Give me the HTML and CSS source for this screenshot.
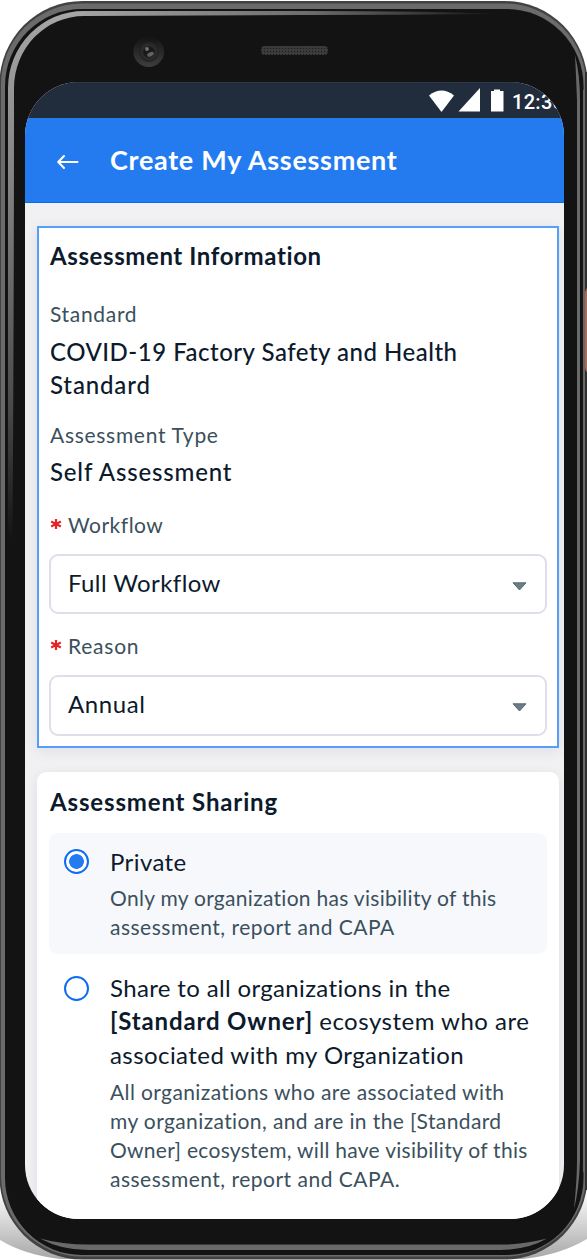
FILE: index.html
```html
<!DOCTYPE html>
<html lang="en">
<head>
<meta charset="utf-8">
<title>Create My Assessment</title>
<link rel="stylesheet" href="styles.css">
</head>
<body>
<div class="phone">
  <svg class="frame" viewBox="0 0 587 1260" width="587" height="1260" aria-hidden="true">
    <defs>
      <linearGradient id="shade" x1="0" y1="0" x2="0" y2="1"><stop offset="0" stop-color="#fff"/><stop offset="1" stop-color="#a8a8a8"/></linearGradient>
      <linearGradient id="leftglow" x1="0" y1="0" x2="0" y2="1"><stop offset="0" stop-color="#a6a6a6"/><stop offset=".3" stop-color="#858585"/><stop offset=".75" stop-color="#4a4a4a"/><stop offset="1" stop-color="#131313"/></linearGradient>
      <linearGradient id="topglow" x1="0" y1="0" x2="1" y2="0"><stop offset="0" stop-color="#a2a2a2"/><stop offset=".55" stop-color="#6c6c6c"/><stop offset="1" stop-color="#131313"/></linearGradient>
      <linearGradient id="lens" x1="0" y1="0" x2="0" y2="1"><stop offset="0" stop-color="#131313"/><stop offset="1" stop-color="#3e3e3e"/></linearGradient>
      <pattern id="mesh" width="3" height="3" patternUnits="userSpaceOnUse"><rect width="3" height="3" fill="#3c3c3c"/><rect width="1.2" height="1.2" fill="#1d1d1d"/></pattern>
    </defs>
    <path d="M0 1190H587V1239Q560 1255 523 1259H60Q25 1255 0 1240Z" fill="url(#shade)"/>
    <rect x="-.5" y="1" width="588" height="1258.500" rx="83" fill="#424244"/>
    <rect x="1" y="3.500" width="585" height="1253" rx="81" fill="#6b6b6b"/>
    <rect x="5" y="9" width="578.500" height="1246" rx="77" fill="#131313"/>
    <path d="M583.700 90V1172" stroke="#686868" stroke-width="1.500"/>
    <path d="M586 72V1190" stroke="#303032" stroke-width="2"/>
    <path d="M8 540V88A76 77 0 0 1 84 11L84 16A70 72 0 0 0 14 88Q14 300 12.500 540Z" fill="url(#leftglow)"/>
    <path d="M83 11H300Q440 11 500 14Q400 15 300 15L83 16Z" fill="url(#topglow)"/>
    <path d="M575 55Q580 75 580 100V1160Q579 1190 574 1209Q577 1180 577 1160V100Q576 75 575 55Z" fill="#696969"/>
    <path d="M40 1238.500Q62 1244.500 88 1244.500H505Q525 1244 547 1238.500Q527 1250 500 1250H88Q61 1250 40 1238.500Z" fill="#696969"/>
    <path d="M585 292Q587 287 588 287V373Q585 372 585 367Z" fill="#a56a59"/>
    <circle cx="148.700" cy="51.800" r="15.300" fill="url(#lens)"/>
    <circle cx="149" cy="52" r="10" fill="#242424"/>
    <circle cx="149" cy="52" r="8.500" fill="#2b2b2b"/>
    <circle cx="149" cy="52" r="5.800" fill="#1a1a1a"/>
    <circle cx="147" cy="49" r="1.900" fill="#747474"/>
    <ellipse cx="150.300" cy="54.500" rx="3.500" ry="2" transform="rotate(-25 150 54)" fill="#626262"/>
    <rect x="261" y="46" width="67" height="9" rx="4" fill="url(#mesh)"/>
  </svg>
  <main class="screen">
    <div class="status">
      <svg class="signals" viewBox="0 0 78 26" width="78" height="26" fill="#fff" aria-hidden="true">
        <path d="M0 7.500Q12.500-2.500 25 7.500L12.500 24Z"/>
        <path d="M29.500 23.500L51 0V23.500Z"/>
        <path d="M62 3H65V1.500H71V3H74.500V23.500H62Z"/>
      </svg>
      <span class="clock">12:30</span>
    </div>
    <header class="bar">
      <svg class="back" viewBox="0 0 22 16" width="22" height="16" fill="none" stroke="#fff" stroke-width="2" stroke-linecap="round" stroke-linejoin="round" aria-label="Back"><path d="M20.500 8H1.500M7 2L1.200 8L7 14"/></svg>
      <h1 class="title">Create My Assessment</h1>
    </header>
    <div class="content">
      <section class="card info">
        <h2 class="heading h-info">Assessment Information</h2>
        <div class="label l-standard">Standard</div>
        <div class="value v-standard"><span class="v1">COVID-19 Factory Safety and Health</span><br><span class="v2">Standard</span></div>
        <div class="label l-type">Assessment Type</div>
        <div class="value v-type">Self Assessment</div>
        <div class="label l-workflow"><svg class="star" viewBox="0 0 12 12" width="12" height="12"><path d="M6 1V11M1.200 3.500L10.800 8.500M1.200 8.500L10.800 3.500"/></svg>Workflow</div>
        <div class="select"><span class="s1">Full Workflow</span><svg class="caret" viewBox="0 0 15 9" width="15" height="9"><path d="M1 .8H14L7.500 8Z"/></svg></div>
        <div class="label l-reason"><svg class="star" viewBox="0 0 12 12" width="12" height="12"><path d="M6 1V11M1.200 3.500L10.800 8.500M1.200 8.500L10.800 3.500"/></svg>Reason</div>
        <div class="select"><span class="s2">Annual</span><svg class="caret" viewBox="0 0 15 9" width="15" height="9"><path d="M1 .8H14L7.500 8Z"/></svg></div>
      </section>
      <section class="card sharing">
        <h2 class="heading h-share">Assessment Sharing</h2>
        <div class="option selected">
          <span class="radio on"></span>
          <div class="text">
            <div class="name n1">Private</div>
            <p class="note"><span class="p1">Only my organization has visibility of this</span><br><span class="p2">assessment, report and CAPA</span></p>
          </div>
        </div>
        <div class="option">
          <span class="radio"></span>
          <div class="text">
            <div class="name"><span class="n2">Share to all organizations in the</span><br><b class="n3">[Standard Owner]</b> <span class="n4">ecosystem who are</span><br><span class="n5">associated with my Organization</span></div>
            <p class="note note-share"><span class="p3">All organizations who are associated with</span><br><span class="p3">my organization, and are in the [Standard</span><br><span class="p4">Owner] ecosystem, will have visibility of this</span><br><span class="p5">assessment, report and CAPA.</span></p>
          </div>
        </div>
      </section>
    </div>
  </main>
</div>
</body>
</html>
```
FILE: styles.css
```css
* { box-sizing: border-box; }
body { margin: 0; background: #fff; font-family: Lato, "Open Sans", sans-serif; color: #0c1a2c; }
.phone { position: relative; width: 587px; height: 1260px; overflow: hidden; padding: 82px 23.5px 41px 25px; }
.frame { position: absolute; left: 0; top: 0; }
.screen { position: relative; height: 1137px; border-radius: 54px; overflow: hidden; background: #f1f1f4; display: flex; flex-direction: column; }

.status { flex: none; height: 36px; background: #212d3d; display: flex; padding: 5px 0 0 404px; border-top: 1px solid #2b3a4b; }
.signals { flex: none; margin-right: 5px; }
.clock { font: 500 20px/28px Roboto, sans-serif; letter-spacing: .3px; color: #fff; white-space: nowrap; }

.bar { flex: none; height: 85px; background: #247bf0; border-bottom: 1px solid #086de9; display: flex; align-items: center; padding: 0 0 0 32px; }
.back { margin: 4px 31px 0 0; }
.title { margin: 0; font-size: 27px; font-weight: 700; line-height: 36px; color: #fff; letter-spacing: .7px; white-space: nowrap; }

.content { padding: 23px 4.500px 0 12px; display: flex; flex-direction: column; gap: 24px; white-space: nowrap; }
.card { background: #fff; box-shadow: 0 3px 14px rgba(20, 25, 50, .08); }
.info { height: 522px; border: 2px solid #559ff6; padding: 11px 10px 0 11px; }
.sharing { height: 500px; border-radius: 9px; padding: 13px 12px 0; }
.heading { margin: 0; font-size: 24px; font-weight: 700; line-height: 34px; }
.h-info { letter-spacing: .6px; }
.h-share { padding-left: 1px; letter-spacing: .85px; }
.label { font-size: 21px; line-height: 30px; color: #3b505c; display: flex; }
.l-standard { margin-top: 26px; letter-spacing: .68px; }
.l-type { margin-top: 19px; letter-spacing: .7px; }
.l-workflow { margin-top: 21px; letter-spacing: .5px; }
.l-reason { margin-top: 17px; letter-spacing: .76px; }
.star { margin: 8px 6px 0 0; fill: none; stroke: #e42323; stroke-width: 2.2; }
.value { font-size: 24px; font-weight: 500; line-height: 33.300px; }
.v-standard { margin-top: 5.7px; }
.v1 { letter-spacing: .5px; }
.v2 { letter-spacing: .85px; }
.v-type { margin-top: 5px; letter-spacing: .82px; }
.select { margin: 14px 0 0 -1px; height: 60.500px; border: 2px solid #dedfe9; border-radius: 9px; display: flex; align-items: center; justify-content: space-between; padding: 0 18px 2px 17px; font-size: 24px; line-height: 34px; }
.s1 { letter-spacing: .4px; }
.s2 { letter-spacing: .6px; }
.caret { margin-top: 7px; fill: #6c7d86; stroke: #576a74; stroke-width: 1; stroke-linejoin: round; }

.option { display: flex; gap: 21px; padding: 12px 0 0 15px; border-radius: 9px; }
.selected { height: 121px; margin: 14px 0 5px; background: #f7f8fc; }
.radio { flex: none; width: 25px; height: 25px; margin-top: 5px; border: 2px solid #0d6cf2; border-radius: 50%; background: #fff; }
.selected .radio { margin-top: 4px; }
.on { background: radial-gradient(circle, #247bf0 7px, #fff 7.700px); }
.name { font-size: 24px; line-height: 33.300px; }
.note { margin: 5px 0 0; font-size: 21px; line-height: 29px; color: #3b505c; }
.note-share { margin-top: 6px; }
.n1 { letter-spacing: .4px; }
.n2 { letter-spacing: .35px; }
.n3 { letter-spacing: .85px; }
.n4 { letter-spacing: .5px; }
.n5 { letter-spacing: .43px; }
.p1 { letter-spacing: .29px; }
.p2 { letter-spacing: .5px; }
.p3 { letter-spacing: .39px; }
.p4 { letter-spacing: .28px; }
.p5 { letter-spacing: .5px; }
```
